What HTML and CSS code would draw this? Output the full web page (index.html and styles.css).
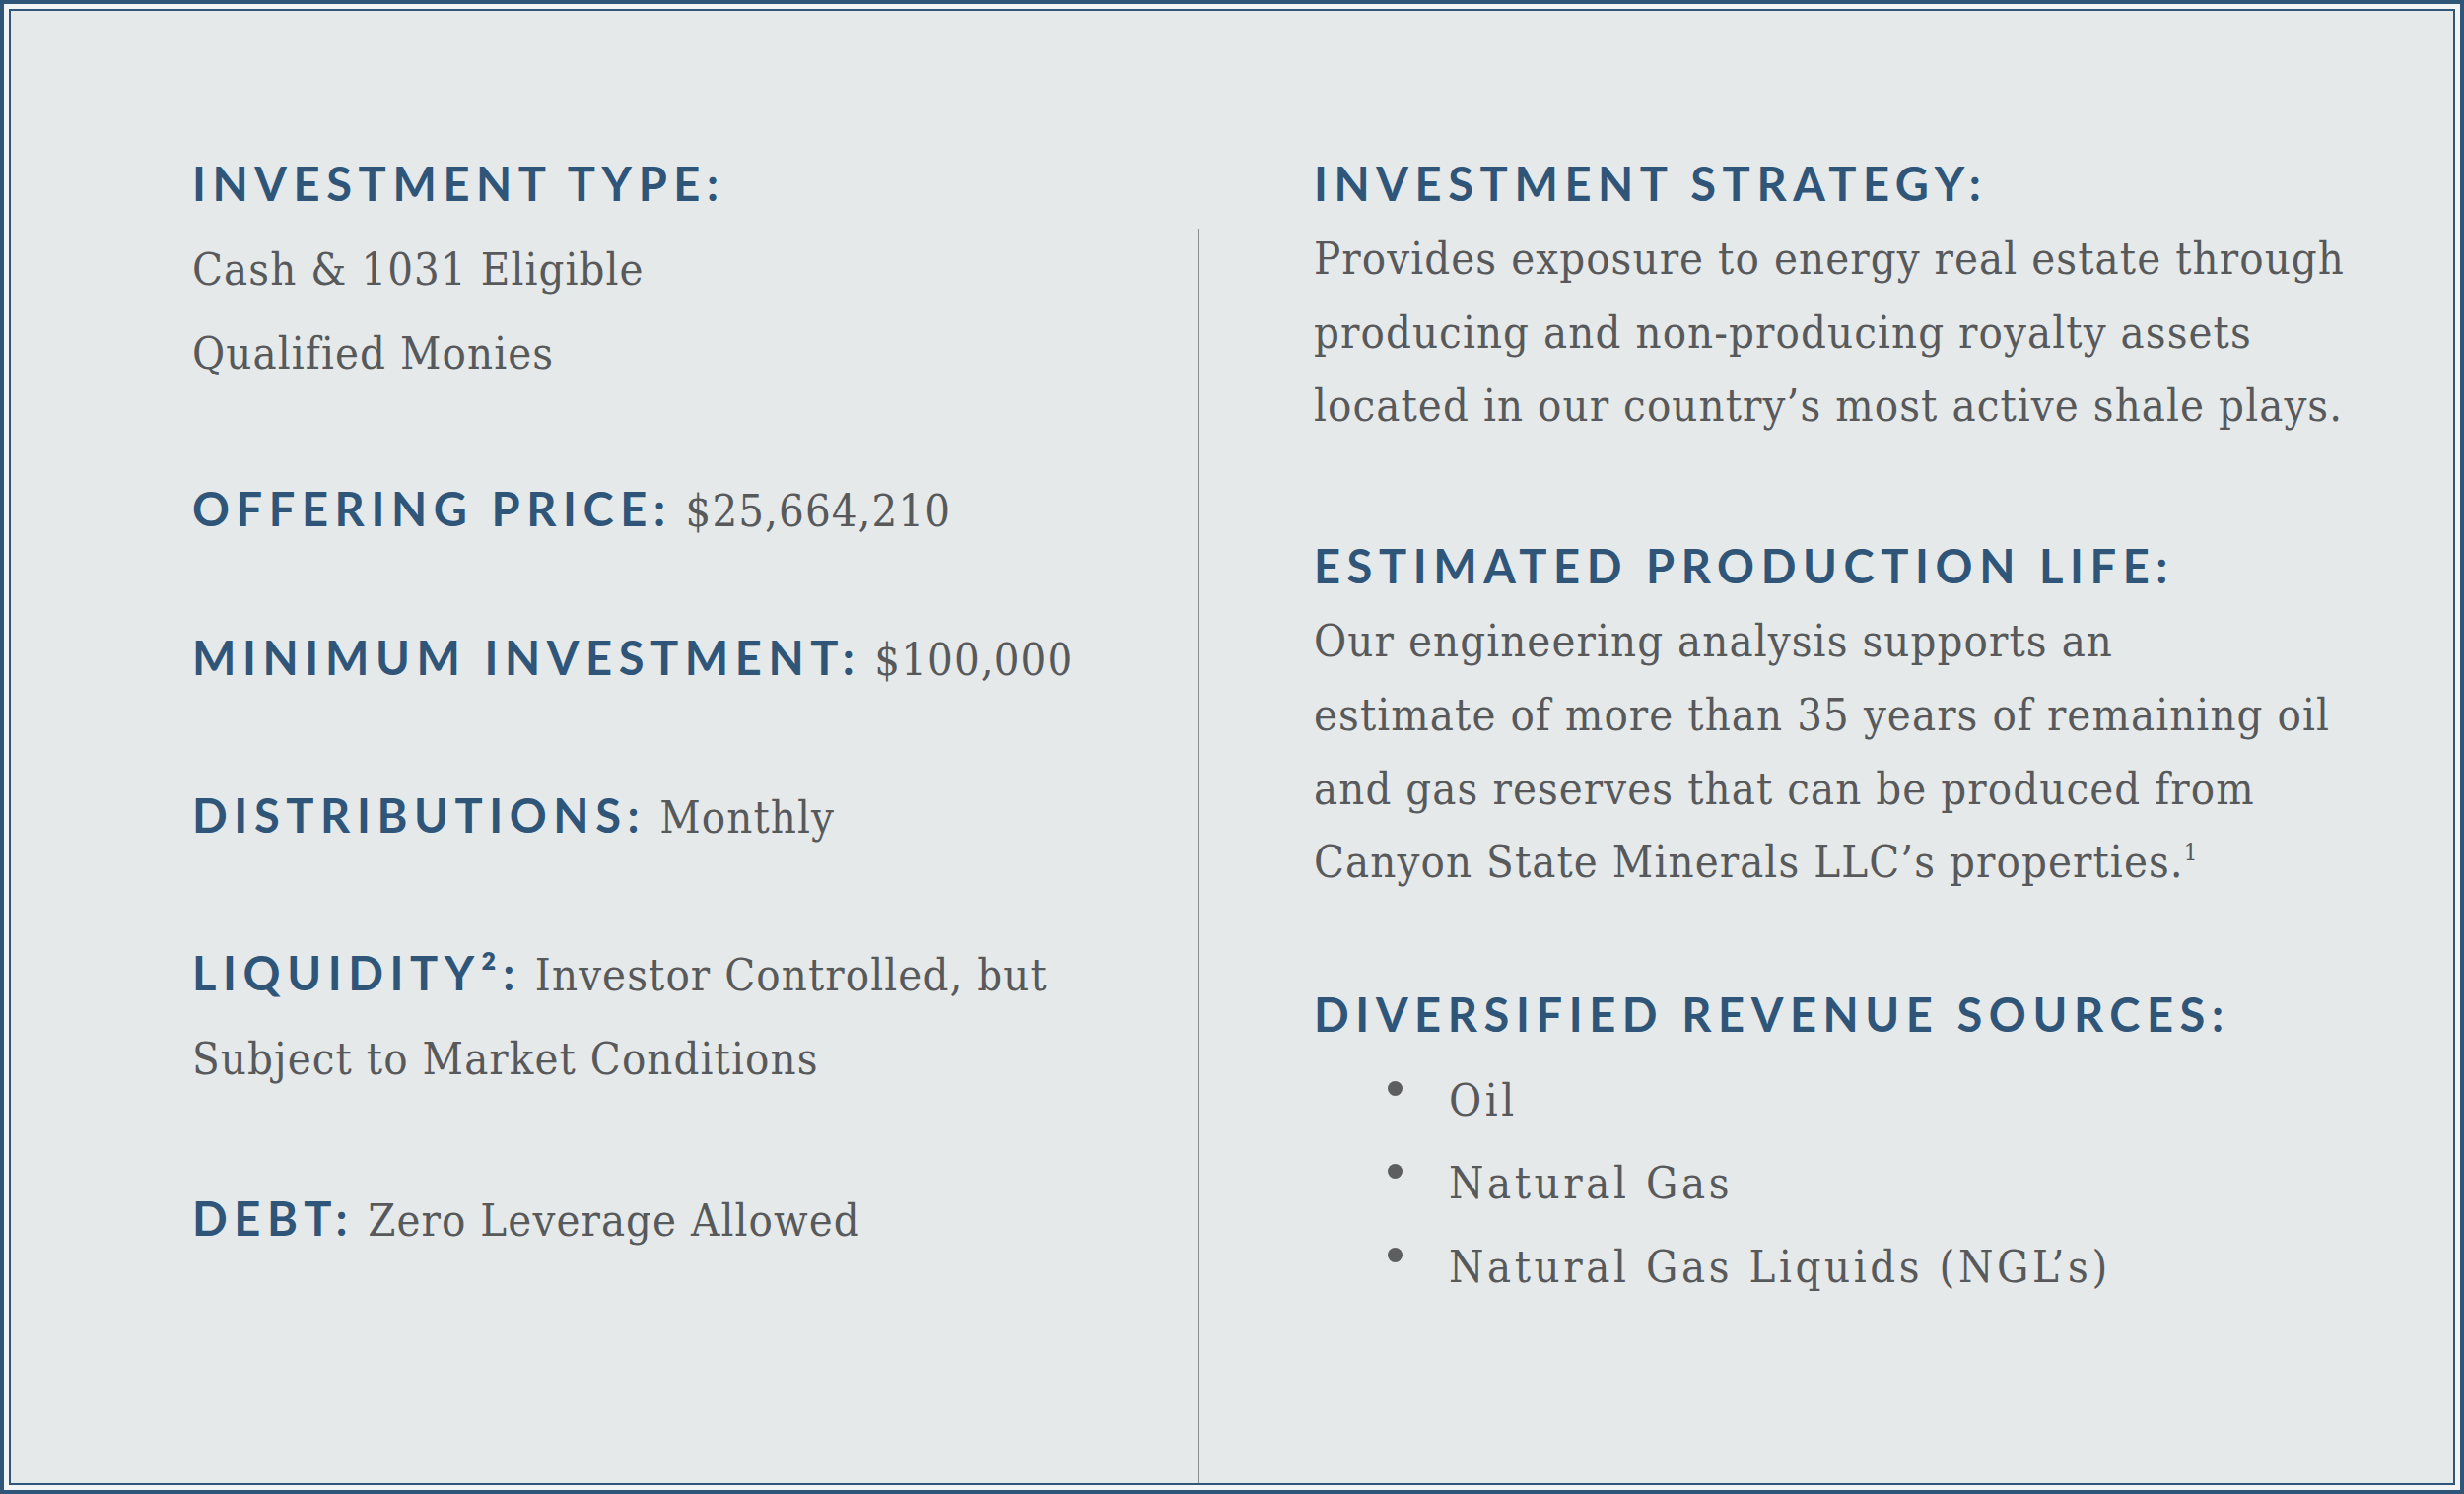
FILE: index.html
```html
<!DOCTYPE html>
<html lang="en">
<head>
<meta charset="utf-8">
<title>Offering Summary</title>
<link rel="stylesheet" href="styles.css">
</head>
<body>
<div class="frame">
  <div class="panel">
    <section class="col col-left">
      <h2 class="label label-block">INVESTMENT TYPE:</h2>
      <p class="value-block">Cash &amp; 1031 Eligible<br>Qualified Monies</p>
      <p class="row row-offering"><span class="label">OFFERING PRICE:</span> $25,664,210</p>
      <p class="row row-min"><span class="label">MINIMUM INVESTMENT:</span> $100,000</p>
      <p class="row"><span class="label">DISTRIBUTIONS:</span> Monthly</p>
      <p class="row"><span class="label">LIQUIDITY²:</span> Investor Controlled, but<br>Subject to Market Conditions</p>
      <p class="row row-debt"><span class="label">DEBT:</span> Zero Leverage Allowed</p>
    </section>
    <div class="divider"></div>
    <section class="col col-right">
      <h2 class="label r-head">INVESTMENT STRATEGY:</h2>
      <p class="r-text">Provides exposure to energy real estate through<br>producing and non-producing royalty assets<br>located in our country’s most active shale plays.</p>
      <h2 class="label r-head r-head-gap">ESTIMATED PRODUCTION LIFE:</h2>
      <p class="r-text">Our engineering analysis supports an<br>estimate of more than 35 years of remaining oil<br>and gas reserves that can be produced from<br>Canyon State Minerals LLC’s properties.<span class="fn">1</span></p>
      <h2 class="label r-head r-head-gap2">DIVERSIFIED REVENUE SOURCES:</h2>
      <ul class="sources">
        <li>Oil</li>
        <li>Natural Gas</li>
        <li>Natural Gas Liquids (NGL’s)</li>
      </ul>
    </section>
  </div>
</div>
</body>
</html>
```

FILE: styles.css
```css
html, body {
  margin: 0;
  padding: 0;
}

body {
  width: 2500px;
  height: 1516px;
  overflow: hidden;
  background: #f1f3f4;
}

.frame {
  box-sizing: border-box;
  width: 2500px;
  height: 1516px;
  border: 4px solid #2f5579;
  padding: 5px;
  background: #f2f4f5;
}

.panel {
  box-sizing: border-box;
  height: 100%;
  border: 2px solid #2f5579;
  background: #e5e9ea;
  display: grid;
  grid-template-columns: 1204px 2px 1fr;
  font-family: "DejaVu Serif Condensed", "DejaVu Serif", serif;
  font-stretch: condensed;
  font-size: 45px;
  letter-spacing: 1.1px;
  color: #58595b;
}

.col p,
.col h2,
.col ul {
  margin: 0;
  font-weight: normal;
}

.col-left {
  padding: 133px 0 0 184px;
  line-height: 85px;
}

.col-right {
  padding: 138px 0 0 116px;
}

.divider {
  margin-top: 221px;
  background: #8b8e91;
}

.col .label {
  font-family: "Lato", "Open Sans", sans-serif;
  font-weight: 700;
  font-size: 47px;
  letter-spacing: 6.6px;
  color: #2f5579;
}

.col .label-block {
  display: block;
  line-height: 85px;
}

.col .value-block {
  margin-top: 2px;
}

.col .row {
  margin-top: 73px;
}

.col .row-offering {
  margin-top: 73px;
}

.col .row-min {
  margin-top: 64px;
}

.col .row-debt {
  margin-top: 77px;
}

.col .r-head {
  line-height: 75px;
}

.col .r-head-gap {
  margin-top: 87px;
}

.col .r-head-gap2 {
  margin-top: 79px;
}

.col .r-text {
  line-height: 74.7px;
  margin-top: 2px;
}

.fn {
  font-size: 24px;
  line-height: 0;
  vertical-align: 17px;
}

.col .sources {
  list-style: none;
  padding: 0;
  margin-top: 8px;
  line-height: 84.5px;
  letter-spacing: 3.6px;
}

.sources li::before {
  content: "";
  display: inline-block;
  width: 15px;
  height: 15px;
  border-radius: 50%;
  background: #5d5e60;
  margin: 0 47px 20px 75px;
}
```
